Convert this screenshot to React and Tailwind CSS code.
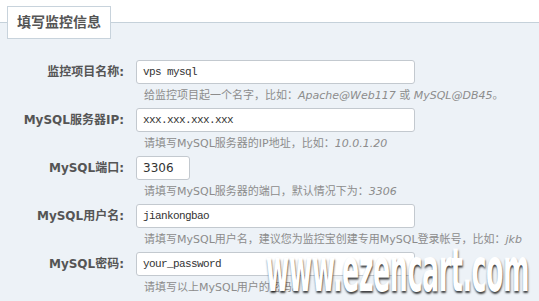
import React from 'react';

const rows = [
  {
    label: '监控项目名称:',
    value: 'vps mysql',
    mono: true,
    help: ['给监控项目起一个名字，比如：', ['Apache@Web117'], ' 或 ', ['MySQL@DB45'], '。'],
  },
  {
    label: 'MySQL服务器IP:',
    value: 'xxx.xxx.xxx.xxx',
    mono: true,
    help: ['请填写MySQL服务器的IP地址，比如：', ['10.0.1.20']],
  },
  {
    label: 'MySQL端口:',
    value: '3306',
    short: true,
    help: ['请填写MySQL服务器的端口，默认情况下为：', ['3306']],
  },
  {
    label: 'MySQL用户名:',
    value: 'jiankongbao',
    mono: true,
    help: ['请填写MySQL用户名，建议您为监控宝创建专用MySQL登录帐号，比如：', ['jkb']],
  },
  {
    label: 'MySQL密码:',
    value: 'your_password',
    mono: true,
    help: ['请填写以上MySQL用户的密码。'],
  },
];

export default function App() {
  return (
    <div className="relative w-[539px] h-[301px] overflow-hidden bg-[#edf2f7] font-['DejaVu_Sans','Noto_Sans_CJK_SC',sans-serif]">
      <div className="h-[23px] bg-white border-b border-[#c5d1da] pl-[7px] pt-[6px]">
        <div className="relative z-10 w-[104px] h-[33px] bg-white border border-[#c8d3dc] flex items-center justify-center text-[14px] font-bold text-[#555]">
          填写监控信息
        </div>
      </div>

      <div className="pt-[37px]">
        {rows.map((r) => (
          <div key={r.label} className="mb-[2px]">
            <div className="flex items-center">
              <div className="w-[124px] text-right text-[12px] font-bold text-[#555] leading-[24px]">{r.label}</div>
              <div
                className={`ml-[12px] h-[24px] bg-white border border-[#c3c9cf] rounded-[3px] flex items-center px-[6px] text-[#333] ${r.short ? 'w-[54px] text-[12px]' : 'w-[279px]'} ${r.mono ? "font-['Liberation_Mono',monospace] text-[11px] tracking-[-0.6px]" : ''}`}
              >
                {r.value}
              </div>
            </div>
            <div className="mt-[2px] pl-[144px] h-[20px] leading-[20px] text-[11px] text-[#8c8c8c] whitespace-nowrap">
              {r.help.map((p, i) =>
                Array.isArray(p) ? (
                  <span key={i} className="italic">{p[0]}</span>
                ) : (
                  <span key={i}>{p}</span>
                )
              )}
            </div>
          </div>
        ))}
      </div>

      <div className="absolute right-[10px] bottom-[1px] origin-right scale-x-[0.47] text-[60px] font-bold leading-none tracking-[-1px] text-white font-['DejaVu_Sans_Condensed','DejaVu_Sans',sans-serif] [text-shadow:1px_2px_3px_rgba(0,0,0,0.75)]">
        www.ezencart.com
      </div>
    </div>
  );
}
